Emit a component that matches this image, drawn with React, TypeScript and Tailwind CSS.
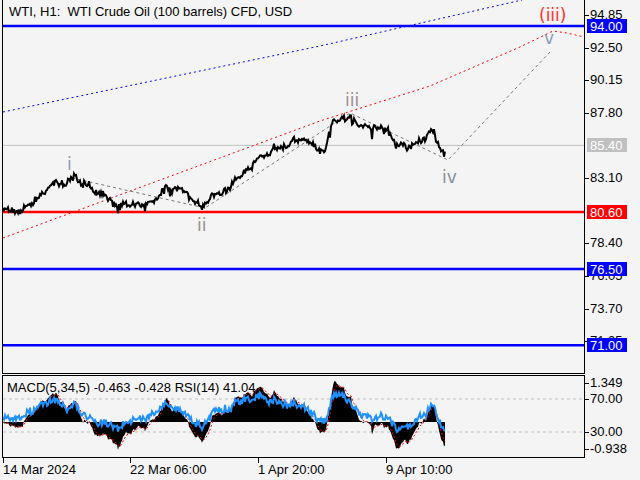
import React from "react";

// page-pixel mapping for the main pane
const priceY = (p: number) => 26 + (94 - p) * 13.88;

const anchors: [number, number][] = [
  [3, 208], [20, 211], [35, 200], [48, 188], [55, 183], [65, 186], [72, 176], [85, 182],
  [95, 193], [105, 197], [115, 208], [125, 204], [140, 205], [155, 200], [163, 190],
  [180, 189], [192, 198], [203, 207], [215, 196], [228, 188], [240, 176], [252, 166],
  [262, 158], [272, 149], [285, 146], [300, 140], [315, 143], [325, 150], [332, 121],
  [340, 123], [350, 116], [358, 124], [366, 126], [376, 127], [388, 130], [396, 144],
  [410, 147], [420, 142], [428, 133], [434, 131], [440, 148], [445, 152],
];

function rnd(seed: number) {
  const x = Math.sin(seed * 127.1 + 311.7) * 43758.5453;
  return x - Math.floor(x);
}

const series: number[] = [];
let drift = 0;
for (let x = 3; x <= 445; x++) {
  let i = 0;
  while (i < anchors.length - 2 && anchors[i + 1][0] < x) i++;
  const [x0, y0] = anchors[i];
  const [x1, y1] = anchors[i + 1];
  const t = Math.min(1, Math.max(0, (x - x0) / (x1 - x0)));
  drift = drift * 0.7 + (rnd(x + 50) - 0.5) * 4;
  const spike = rnd(x + 200) > 0.93 ? (rnd(x + 300) - 0.3) * 14 : 0;
  series.push(y0 + (y1 - y0) * t + (rnd(x) - 0.5) * 5 + drift + spike);
}
const pricePts = series.map((y, i) => `${i + 3},${y.toFixed(1)}`).join(" ");

// indicators computed from the series
const prices = series.map((y) => 94 - (y - 26) / 13.88);
const ema = (arr: number[], n: number) => {
  const k = 2 / (n + 1);
  const out: number[] = [];
  arr.forEach((v, i) => out.push(i === 0 ? v : v * k + out[i - 1] * (1 - k)));
  return out;
};
const e5 = ema(prices, 5);
const e34 = ema(prices, 34);
const macd = e5.map((v, i) => v - e34[i]);
const signal = ema(macd, 5);
const zeroY = 422;
const macdY = (v: number) => Math.max(379, Math.min(452, zeroY - v * 36));
const histPath =
  `M3,${zeroY} ` +
  macd.map((v, i) => `L${i + 3},${macdY(v).toFixed(1)}`).join(" ") +
  ` L445,${zeroY} Z`;
const sigPts = signal.map((v, i) => `${i + 3},${macdY(v).toFixed(1)}`).join(" ");
const rsiPts = macd
  .map((v, i) => {
    const r = 50 + v * 24 + (rnd(i + 900) - 0.5) * 8;
    const y = 432 - ((r - 30) / 40) * 33;
    return `${i + 3},${Math.max(380, Math.min(450, y)).toFixed(1)}`;
  })
  .join(" ");

const scaleTicks: [string, number][] = [
  ["94.85", 15], ["92.50", 48], ["90.15", 80], ["87.80", 113], ["83.10", 178],
  ["78.40", 243], ["76.05", 276], ["73.70", 309], ["71.05", 341],
];
const boxes: [string, string, number][] = [
  ["94.00", "bg-[#0000ff]", priceY(94)],
  ["85.40", "bg-[#c0c0c0]", priceY(85.4)],
  ["80.60", "bg-[#ff0000]", priceY(80.6)],
  ["76.50", "bg-[#0000ff]", priceY(76.5)],
  ["71.00", "bg-[#0000ff]", priceY(71)],
];
const indTicks: [string, number][] = [["1.349", 383], ["70.00", 399], ["30.00", 432], ["-0.938", 449]];
const times: [string, number][] = [
  ["14 Mar 2024", 3], ["22 Mar 06:00", 130], ["1 Apr 20:00", 258], ["9 Apr 10:00", 386],
];

export default function App() {
  return (
    <div
      className="flex w-[640px] h-[480px] bg-[#f4f4f4] text-black text-[13px] leading-none overflow-hidden"
      style={{ fontFamily: '"Liberation Sans", Arial, sans-serif' }}
    >
      <div className="ml-[2px] w-[583px] flex flex-col">
        {/* main pane */}
        <div className="relative h-[374px] border-x border-b border-black">
          <svg className="absolute inset-0" width="581" height="373" viewBox="3 0 581 373">
            <line x1="3" x2="584" y1={priceY(85.4)} y2={priceY(85.4)} stroke="#c0c0c0" strokeWidth="1" />
            <line x1="3" x2="584" y1={priceY(94)} y2={priceY(94)} stroke="#0000ff" strokeWidth="2.5" />
            <line x1="3" x2="584" y1={priceY(80.6)} y2={priceY(80.6)} stroke="#ff0000" strokeWidth="2.5" />
            <line x1="3" x2="584" y1={priceY(76.5)} y2={priceY(76.5)} stroke="#0000ff" strokeWidth="2.5" />
            <line x1="3" x2="584" y1={priceY(71)} y2={priceY(71)} stroke="#0000ff" strokeWidth="2.5" />
            <polyline points="3,112 320,46 522,0" fill="none" stroke="#0000ff" strokeWidth="1" strokeDasharray="2 3" />
            <polyline points="3,238 320,121 430,86 520,47 553,31 567,33 584,37" fill="none" stroke="#ff0000" strokeWidth="1" strokeDasharray="2 3" />
            <polyline points="72,178 205,208 350,113 448,160 550,52" fill="none" stroke="#777" strokeWidth="1" strokeDasharray="3 3" />
            <polyline points={pricePts} fill="none" stroke="#000" strokeWidth="2" />
            <text x="67" y="170" fill="#8a9cb3" fontSize="17" fontFamily="DejaVu Sans, sans-serif">i</text>
            <text x="197" y="231" fill="#9b8f8f" fontSize="17" fontFamily="DejaVu Sans, sans-serif">ii</text>
            <text x="345" y="106" fill="#9b8f8f" fontSize="17" fontFamily="DejaVu Sans, sans-serif">iii</text>
            <text x="442" y="183" fill="#8a8f9b" fontSize="17" fontFamily="DejaVu Sans, sans-serif">iv</text>
            <text x="544" y="44" fill="#8a9cb3" fontSize="17" fontFamily="DejaVu Sans, sans-serif">v</text>
            <text x="539" y="21" fill="#ff3030" fontSize="17" fontFamily="DejaVu Sans, sans-serif">(iii)</text>
          </svg>
          <div className="absolute left-[6px] top-[5px] whitespace-pre">WTI, H1:  WTI Crude Oil (100 barrels) CFD, USD</div>
        </div>
        {/* indicator pane */}
        <div className="relative mt-[1px] h-[83px] border border-black">
          <svg className="absolute inset-0" width="581" height="81" viewBox="3 376 581 81">
            <line x1="3" x2="584" y1="399" y2="399" stroke="#c0c0c0" strokeDasharray="3 3" />
            <line x1="3" x2="584" y1="432" y2="432" stroke="#c0c0c0" strokeDasharray="3 3" />
            <path d={histPath} fill="#000" />
            <polyline points={sigPts} fill="none" stroke="#ff0000" strokeWidth="1" strokeDasharray="2 2" />
            <polyline points={rsiPts} fill="none" stroke="#1e90ff" strokeWidth="2" />
          </svg>
          <div className="absolute left-[4px] top-[5px] whitespace-pre">MACD(5,34,5) -0.463 -0.428 RSI(14) 41.04</div>
        </div>
        {/* time axis */}
        <div className="relative flex-1">
          {times.map(([t, x]) => (
            <React.Fragment key={t}>
              <div className="absolute top-0 w-px h-[5px] bg-black" style={{ left: x - 2 }} />
              <div className="absolute top-[5px] whitespace-nowrap" style={{ left: x - 2 }}>{t}</div>
            </React.Fragment>
          ))}
        </div>
      </div>
      {/* price scale */}
      <div className="relative flex-1">
        {scaleTicks.map(([t, y]) => (
          <React.Fragment key={t}>
            <div className="absolute left-0 w-[4px] h-px bg-black" style={{ top: y }} />
            <div className="absolute left-[5px]" style={{ top: y - 7 }}>{t}</div>
          </React.Fragment>
        ))}
        {boxes.map(([t, c, y]) => (
          <div key={t} className={`absolute left-[2px] w-[40px] h-[14px] pl-[3px] text-white ${c}`} style={{ top: y - 7 }}>
            <span className="relative top-[1px]">{t}</span>
          </div>
        ))}
        {indTicks.map(([t, y]) => (
          <React.Fragment key={t}>
            <div className="absolute left-0 w-[4px] h-px bg-black" style={{ top: y }} />
            <div className="absolute left-[5px]" style={{ top: y - 7 }}>{t}</div>
          </React.Fragment>
        ))}
      </div>
    </div>
  );
}
